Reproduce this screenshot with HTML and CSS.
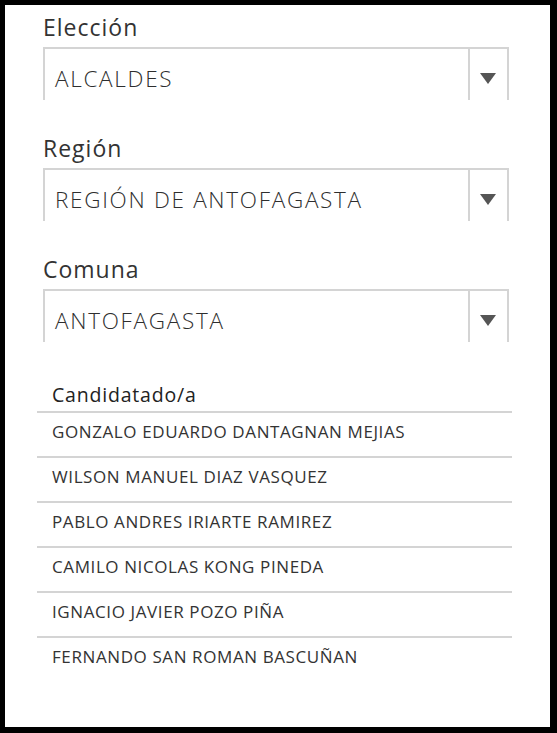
FILE: index.html
```html
<!DOCTYPE html>
<html lang="es">

<head>
    <meta charset="UTF-8">
    <title>Resultados</title>
    <link rel="stylesheet" href="styles.css">
</head>

<body>

    <div class="panel">
        <!--filtros-->
        <div class="field">
            <label class="field_label">Elección</label>
            <div class="select_box">
                <span class="select_value">ALCALDES</span>
                <span class="select_arrow"></span>
            </div>
        </div>

        <div class="field">
            <label class="field_label">Región</label>
            <div class="select_box">
                <span class="select_value">REGIÓN DE ANTOFAGASTA</span>
                <span class="select_arrow"></span>
            </div>
        </div>

        <div class="field">
            <label class="field_label">Comuna</label>
            <div class="select_box">
                <span class="select_value">ANTOFAGASTA</span>
                <span class="select_arrow"></span>
            </div>
        </div>

        <!--lista de candidatos-->
        <div class="cand_list">
            <div class="cand_head">Candidatado/a</div>
            <div class="cand_row">GONZALO EDUARDO DANTAGNAN MEJIAS</div>
            <div class="cand_row">WILSON MANUEL DIAZ VASQUEZ</div>
            <div class="cand_row">PABLO ANDRES IRIARTE RAMIREZ</div>
            <div class="cand_row">CAMILO NICOLAS KONG PINEDA</div>
            <div class="cand_row">IGNACIO JAVIER POZO PIÑA</div>
            <div class="cand_row">FERNANDO SAN ROMAN BASCUÑAN</div>
        </div>
    </div>

</body>

</html>
```

FILE: styles.css
```css
* {
    margin: 0px;
    padding: 0px;
    box-sizing: border-box;
}

body {
    background-color: #000000;
    padding: 5px 7px 6px 5px;
    font-family: "Open Sans", "Noto Sans", sans-serif;
}

.panel {
    background-color: white;
    height: 722px;
    padding-top: 7px;
}

.field {
    margin: 0 38px 33px 38px;
}

.field_label {
    display: block;
    font-size: 23px;
    line-height: 30px;
    letter-spacing: 1px;
    color: #333333;
    margin-bottom: 5px;
}

.select_box {
    display: flex;
    width: 466px;
    height: 53px;
    border: 2px solid #d4d4d4;
    border-bottom: none;
}

.select_value {
    flex: 1;
    font-size: 22.5px;
    font-weight: 300;
    line-height: 30px;
    letter-spacing: 1.7px;
    color: #2e2e2e;
    padding: 15px 0 0 10px;
}

/*the arrow part of the dropdown*/
.select_arrow {
    width: 39px;
    border-left: 2px solid #d4d4d4;
    position: relative;
}

.select_arrow::after {
    content: "";
    position: absolute;
    left: 10px;
    top: 24px;
    border-left: 8px solid transparent;
    border-right: 8px solid transparent;
    border-top: 11px solid #555555;
}

.cand_list {
    width: 475px;
    margin: 0 0 0 32px;
    padding-top: 8px;
}

.cand_head {
    font-size: 19.5px;
    font-weight: 500;
    line-height: 24px;
    letter-spacing: 0.8px;
    color: #222222;
    padding: 0 15px 4px 15px;
}

.cand_row {
    font-size: 17px;
    line-height: 24px;
    letter-spacing: 0.6px;
    color: #333333;
    border-top: 2px solid #d4d4d4;
    padding: 7px 15px 12px 15px;
}
```
